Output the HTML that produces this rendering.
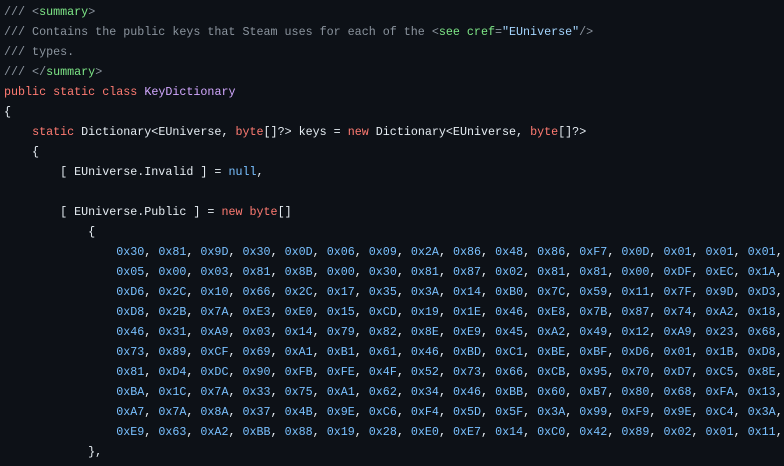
<!DOCTYPE html>
<html><head><meta charset="utf-8"><style>
html,body{margin:0;padding:0;background:#0d1117;width:784px;height:466px;overflow:hidden}
pre{margin:0;padding:2px 0 0 4px;font-family:"Liberation Mono",monospace;font-size:11.7px;line-height:20px;color:#e6edf3;white-space:pre}
.c{color:#8b949e}.g{color:#7ee787}.k{color:#ff7b72}.t{color:#d2a8ff}.s{color:#a5d6ff}
b{font-weight:normal;color:#79c0ff}
</style></head><body><pre><span class="c">/// &lt;<span class="g">summary</span>&gt;</span>
<span class="c">/// Contains the public keys that Steam uses for each of the &lt;<span class="g">see</span> <span class="g">cref</span>=<span class="s">"EUniverse"</span>/&gt;</span>
<span class="c">/// types.</span>
<span class="c">/// &lt;/<span class="g">summary</span>&gt;</span>
<span class="k">public</span> <span class="k">static</span> <span class="k">class</span> <span class="t">KeyDictionary</span>
{
    <span class="k">static</span> Dictionary&lt;EUniverse, <span class="k">byte</span>[]?&gt; keys = <span class="k">new</span> Dictionary&lt;EUniverse, <span class="k">byte</span>[]?&gt;
    {
        [ EUniverse.Invalid ] = <b>null</b>,

        [ EUniverse.Public ] = <span class="k">new</span> <span class="k">byte</span>[]
            {
                <b>0x30</b>, <b>0x81</b>, <b>0x9D</b>, <b>0x30</b>, <b>0x0D</b>, <b>0x06</b>, <b>0x09</b>, <b>0x2A</b>, <b>0x86</b>, <b>0x48</b>, <b>0x86</b>, <b>0xF7</b>, <b>0x0D</b>, <b>0x01</b>, <b>0x01</b>, <b>0x01</b>,
                <b>0x05</b>, <b>0x00</b>, <b>0x03</b>, <b>0x81</b>, <b>0x8B</b>, <b>0x00</b>, <b>0x30</b>, <b>0x81</b>, <b>0x87</b>, <b>0x02</b>, <b>0x81</b>, <b>0x81</b>, <b>0x00</b>, <b>0xDF</b>, <b>0xEC</b>, <b>0x1A</b>,
                <b>0xD6</b>, <b>0x2C</b>, <b>0x10</b>, <b>0x66</b>, <b>0x2C</b>, <b>0x17</b>, <b>0x35</b>, <b>0x3A</b>, <b>0x14</b>, <b>0xB0</b>, <b>0x7C</b>, <b>0x59</b>, <b>0x11</b>, <b>0x7F</b>, <b>0x9D</b>, <b>0xD3</b>,
                <b>0xD8</b>, <b>0x2B</b>, <b>0x7A</b>, <b>0xE3</b>, <b>0xE0</b>, <b>0x15</b>, <b>0xCD</b>, <b>0x19</b>, <b>0x1E</b>, <b>0x46</b>, <b>0xE8</b>, <b>0x7B</b>, <b>0x87</b>, <b>0x74</b>, <b>0xA2</b>, <b>0x18</b>,
                <b>0x46</b>, <b>0x31</b>, <b>0xA9</b>, <b>0x03</b>, <b>0x14</b>, <b>0x79</b>, <b>0x82</b>, <b>0x8E</b>, <b>0xE9</b>, <b>0x45</b>, <b>0xA2</b>, <b>0x49</b>, <b>0x12</b>, <b>0xA9</b>, <b>0x23</b>, <b>0x68</b>,
                <b>0x73</b>, <b>0x89</b>, <b>0xCF</b>, <b>0x69</b>, <b>0xA1</b>, <b>0xB1</b>, <b>0x61</b>, <b>0x46</b>, <b>0xBD</b>, <b>0xC1</b>, <b>0xBE</b>, <b>0xBF</b>, <b>0xD6</b>, <b>0x01</b>, <b>0x1B</b>, <b>0xD8</b>,
                <b>0x81</b>, <b>0xD4</b>, <b>0xDC</b>, <b>0x90</b>, <b>0xFB</b>, <b>0xFE</b>, <b>0x4F</b>, <b>0x52</b>, <b>0x73</b>, <b>0x66</b>, <b>0xCB</b>, <b>0x95</b>, <b>0x70</b>, <b>0xD7</b>, <b>0xC5</b>, <b>0x8E</b>,
                <b>0xBA</b>, <b>0x1C</b>, <b>0x7A</b>, <b>0x33</b>, <b>0x75</b>, <b>0xA1</b>, <b>0x62</b>, <b>0x34</b>, <b>0x46</b>, <b>0xBB</b>, <b>0x60</b>, <b>0xB7</b>, <b>0x80</b>, <b>0x68</b>, <b>0xFA</b>, <b>0x13</b>,
                <b>0xA7</b>, <b>0x7A</b>, <b>0x8A</b>, <b>0x37</b>, <b>0x4B</b>, <b>0x9E</b>, <b>0xC6</b>, <b>0xF4</b>, <b>0x5D</b>, <b>0x5F</b>, <b>0x3A</b>, <b>0x99</b>, <b>0xF9</b>, <b>0x9E</b>, <b>0xC4</b>, <b>0x3A</b>,
                <b>0xE9</b>, <b>0x63</b>, <b>0xA2</b>, <b>0xBB</b>, <b>0x88</b>, <b>0x19</b>, <b>0x28</b>, <b>0xE0</b>, <b>0xE7</b>, <b>0x14</b>, <b>0xC0</b>, <b>0x42</b>, <b>0x89</b>, <b>0x02</b>, <b>0x01</b>, <b>0x11</b>,
            },
</pre></body></html>
